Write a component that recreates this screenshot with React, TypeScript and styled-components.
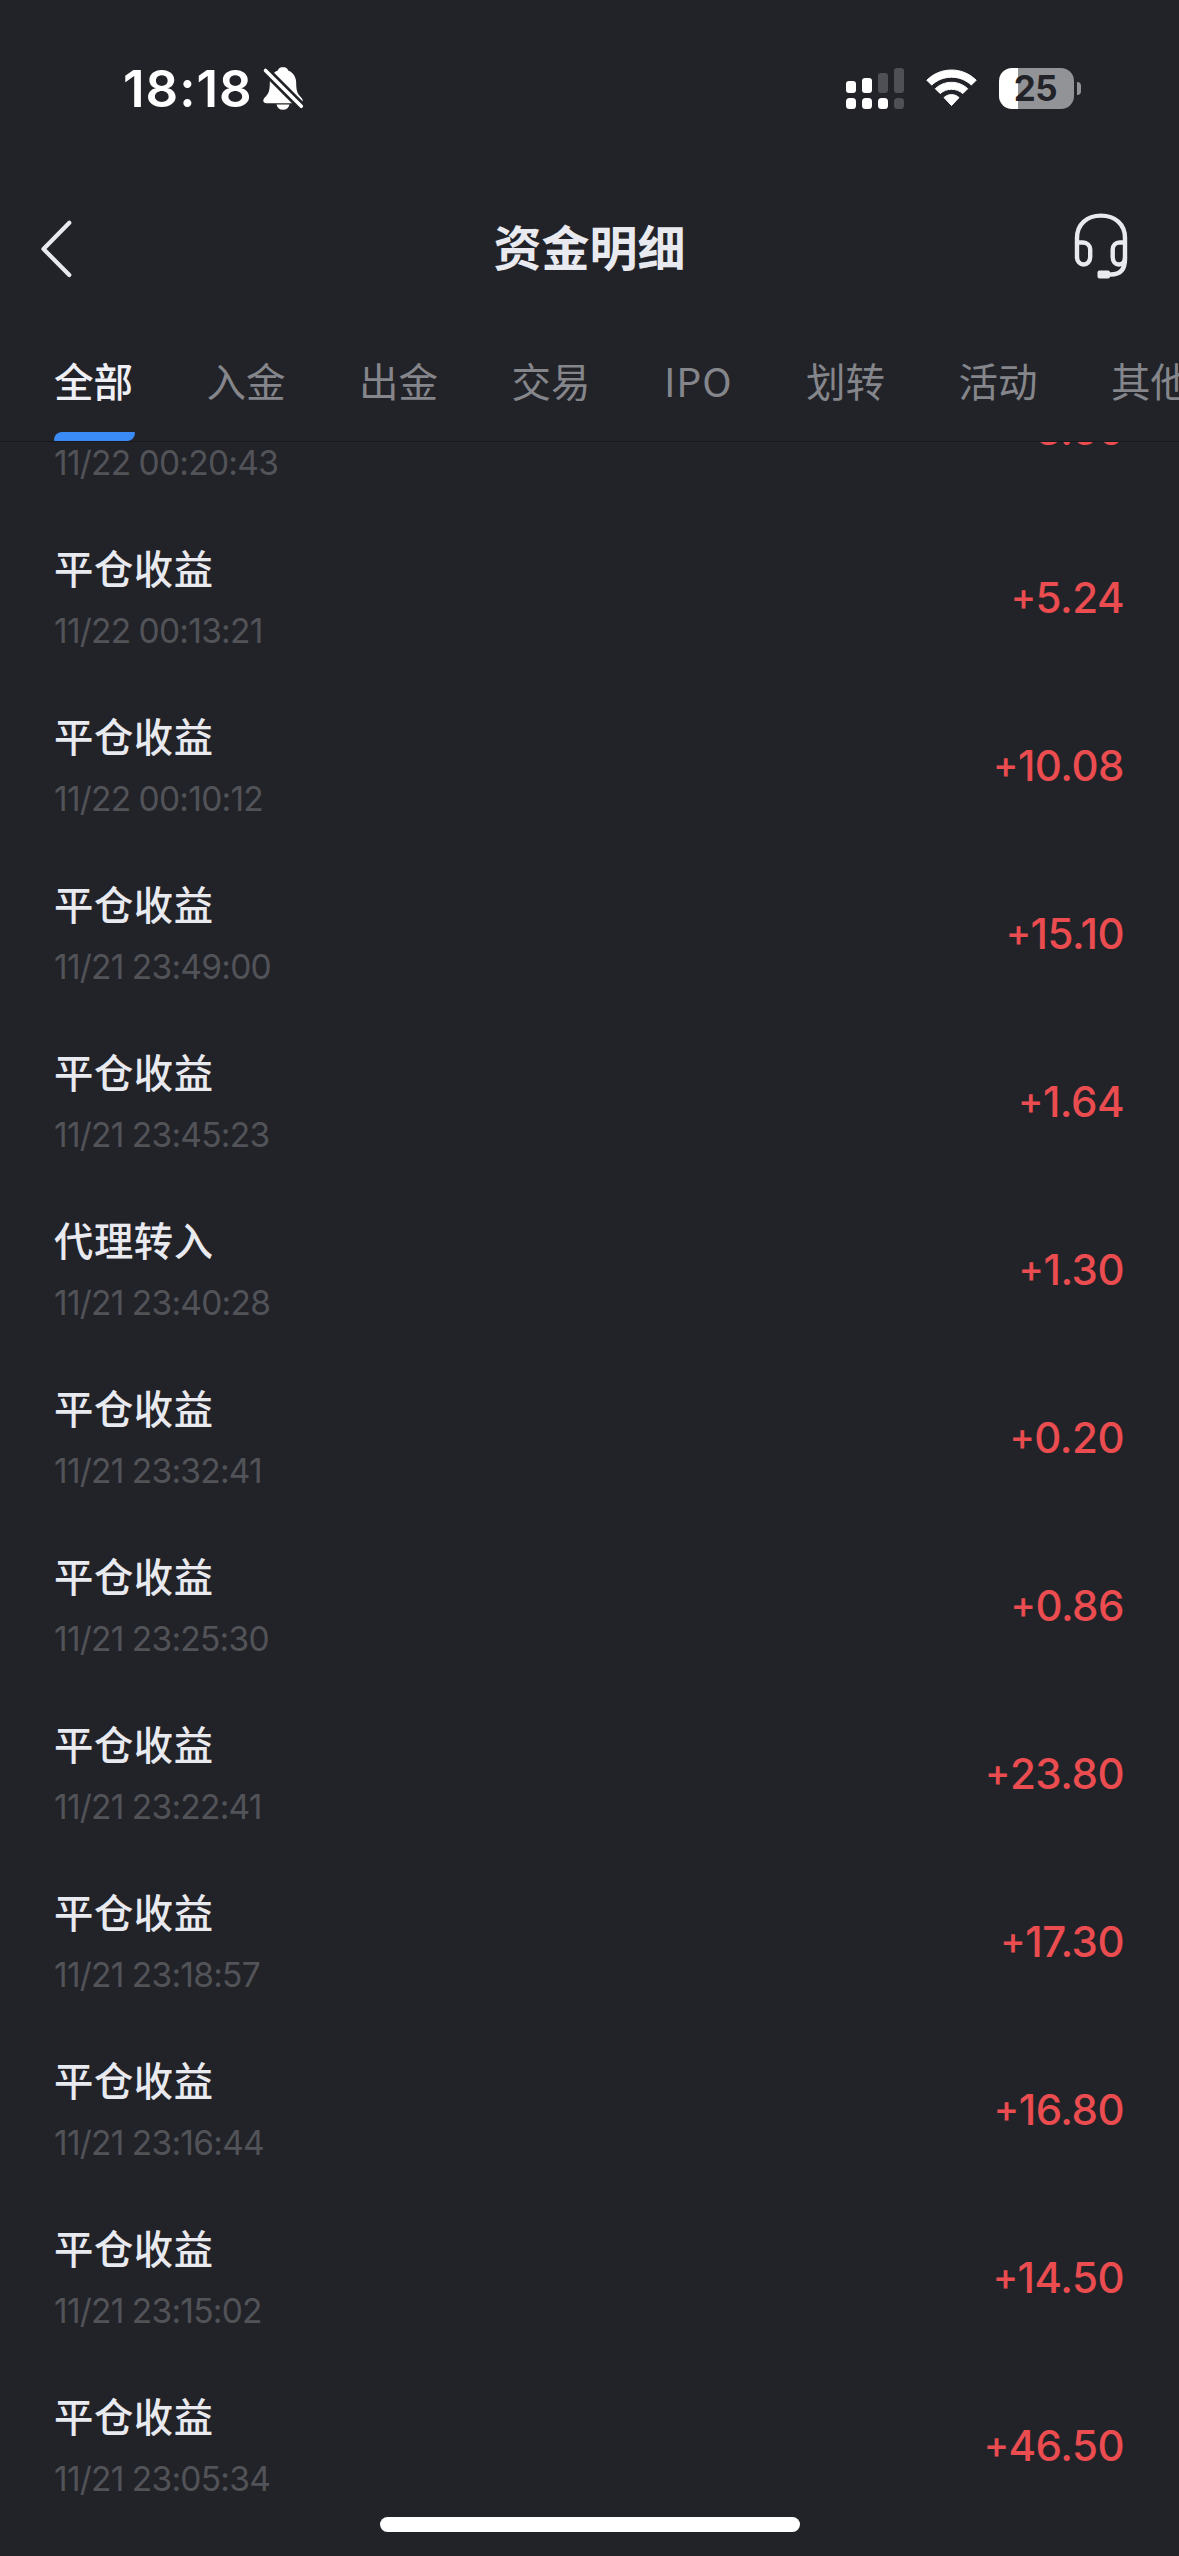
import React from "react";
import styled, { createGlobalStyle } from "styled-components";

const GlobalStyle = createGlobalStyle`
  * { box-sizing: border-box; }
  html, body { margin: 0; padding: 0; background: #222328; }
`;

const latin = `Inter, "Noto Sans CJK SC", sans-serif`;
const cjk = `"Noto Sans CJK SC", sans-serif`;

const Screen = styled.div`
  position: relative;
  display: flex;
  flex-direction: column;
  width: 1179px;
  height: 2556px;
  overflow: hidden;
  background: #222328;
  color: #e9eaf0;
  font-family: ${cjk};
`;

const StatusBar = styled.header`
  flex: none;
  display: flex;
  align-items: center;
  justify-content: space-between;
  height: 176px;
  padding: 0 98px 0 123px;
`;

const StatusGroup = styled.div<{ $gap: number }>`
  display: flex;
  align-items: center;
  gap: ${(p) => p.$gap}px;
`;

const Clock = styled.span`
  width: 128px;
  padding-top: 1px;
  font: 600 51px/60px ${latin};
  letter-spacing: 1px;
  color: #fff;
  white-space: nowrap;
`;

const Battery = styled.div`
  display: flex;
  align-items: center;
  gap: 3px;
`;

const BatteryBody = styled.div<{ $level: number }>`
  width: 75px;
  height: 41px;
  border-radius: 13px;
  background: linear-gradient(to right, #fff ${(p) => p.$level}%, #929396 ${(p) => p.$level}%);
  color: #222328;
  text-align: center;
  font: 700 35px/41px ${latin};
  letter-spacing: -0.5px;
  text-indent: -2px;
`;

const BatteryCap = styled.div`
  width: 4px;
  height: 13px;
  border-radius: 0 5px 5px 0;
  background: #929396;
`;

const NavBar = styled.nav`
  flex: none;
  display: grid;
  grid-template-columns: 120px 1fr 120px;
  align-items: center;
  height: 145px;
`;

const NavButton = styled.button<{ $end?: boolean }>`
  display: flex;
  justify-content: ${(p) => (p.$end ? "flex-end" : "flex-start")};
  padding: ${(p) => (p.$end ? "0 51px 5px 0" : "1px 0 0 40px")};
  border: 0;
  background: none;
`;

const Title = styled.h1`
  margin: 0;
  padding-bottom: 8px;
  text-align: center;
  font: 700 48px/60px ${cjk};
`;

const Tabs = styled.div`
  flex: none;
  display: flex;
  gap: 72.5px;
  height: 121px;
  padding-left: 54px;
  border-bottom: 1px solid #17181c;
  white-space: nowrap;
`;

const Tab = styled.button<{ $active?: boolean; $width?: number }>`
  flex: none;
  display: flex;
  flex-direction: column;
  align-items: flex-start;
  justify-content: space-between;
  width: ${(p) => p.$width ?? 80}px;
  padding: 29px 0 0;
  border: 0;
  background: none;
  color: ${(p) => (p.$active ? "#eff0f5" : "#85868b")};
  font: ${(p) => (p.$active ? 500 : 400)} 39.5px/60px ${cjk};
  letter-spacing: ${(p) => (p.$width ? 0.8 : 0)}px;
`;

const TabMarker = styled.span`
  width: 81px;
  height: 9px;
  border-radius: 8px 1px 8px 1px;
  background: #3a8bf5;
`;

const ListViewport = styled.main`
  flex: 1;
  overflow: hidden;
`;

const List = styled.ul`
  margin: -97px 0 0;
  padding: 0;
  list-style: none;
`;

const Row = styled.li`
  display: flex;
  align-items: center;
  justify-content: space-between;
  height: 168px;
  padding: 0 55px 0 54px;
`;

const Entry = styled.div`
  display: flex;
  flex-direction: column;
  gap: 14px;
  padding-top: 4px;
`;

const EntryName = styled.span`
  font: 500 39.3px/50px ${cjk};
  letter-spacing: 0.6px;
`;

const EntryTime = styled.time`
  font: 400 33.5px/50px ${latin};
  font-feature-settings: "calt" 0;
  letter-spacing: -0.75px;
  word-spacing: -0.5px;
  color: #525358;
`;

const Amount = styled.span`
  display: flex;
  align-items: center;
  padding-top: 1px;
  font: 500 42px/50px ${latin};
  letter-spacing: -0.5px;
  color: #ea4c50;
`;

const Sign = styled.span`
  padding-bottom: 4px;
  font-size: 38px;
`;

const HomeIndicator = styled.div`
  position: absolute;
  left: 380px;
  bottom: 24px;
  width: 420px;
  height: 15px;
  border-radius: 8px;
  background: #fff;
`;

const MutedBell = () => (
  <svg width="42" height="45" viewBox="262 66 42 45">
    <path
      fill="#fff"
      d="M283 67c-2.800 0-4.500 1.500-5.200 3.500-5 2-8 6.500-8 12.500 0 8-1.300 10.500-4.500 14-1.500 1.600-2 2.500-2 3.800 0 1.600 1.200 2.400 3 2.400h33.400c1.800 0 3-.9 3-2.500 0-1.300-.6-2.200-2-3.700-3.200-3.500-4.500-6-4.500-14 0-6-3-10.500-8-12.500-.7-2-2.400-3.500-5.200-3.500zM276.500 104.500h13c-.7 3.300-3.200 5.300-6.500 5.300s-5.800-2-6.500-5.300z"
    />
    <path d="M262 67 302 107" stroke="#222328" strokeWidth="9" />
    <path d="M265.500 70.500 301.300 106.300" stroke="#fff" strokeWidth="3.600" strokeLinecap="round" />
  </svg>
);

const Signal = () => (
  <svg width="58" height="41" viewBox="0 0 58 41">
    {[13, 10, 5, 0].map((top, i) => (
      <g key={top}>
        <rect x={i * 16} y={top} width="10" height={25 - top} rx="3" fill={i < 2 ? "#fff" : "#4f5055"} />
        <rect x={i * 16} y="30" width="10" height="11" rx="3.500" fill={i < 3 ? "#fff" : "#4f5055"} />
      </g>
    ))}
  </svg>
);

const Wifi = () => (
  <svg width="51" height="38" viewBox="0 0 51 38">
    <g fill="#fff" stroke="#fff" strokeLinejoin="round" strokeWidth="1">
      <path d="M.8 11.200C7.500 4.700 16 1 25.500 1s18 3.700 24.700 10.200L45.300 16.100C40 11 33 8.200 25.500 8.200S11 11 5.700 16.100z" />
      <path d="M9.300 19.700C13.700 15.600 19.300 13.300 25.500 13.300s11.800 2.300 16.200 6.400L36.800 24.600C33.700 21.800 29.800 20.300 25.500 20.300s-8.200 1.500-11.300 4.300z" />
      <path d="M18 28.600C20 26.700 22.600 25.600 25.500 25.600s5.500 1.100 7.500 3L25.500 36.600z" />
    </g>
  </svg>
);

const BackIcon = () => (
  <svg width="34" height="60" viewBox="40 219 34 60">
    <path
      d="M69.300 222.700 43.500 249 69.300 275"
      fill="none"
      stroke="#e9eaf0"
      strokeWidth="4.200"
      strokeLinecap="round"
      strokeLinejoin="round"
    />
  </svg>
);

const HeadsetIcon = () => (
  <svg width="54" height="66" viewBox="0 0 54 66">
    <g fill="none" stroke="#e9eaf0" strokeWidth="4.400">
      <path d="M3 45.500V25C3 11 13 2.600 27 2.600S51 11 51 25V46C51 57 46 61.500 37 61.500H34" />
      <path d="M3 29.500H9C13 29.500 16.200 32.500 16.200 36.500V44C16.200 48.500 13 51.500 9.600 51.500S3 48.500 3 44.500" />
      <path d="M51 29.500H45.500C41.500 29.500 38.700 32.500 38.700 36.500V44C38.700 48.500 41.500 51.500 45 51.500S51 48.500 51 44.500" />
    </g>
    <rect x="23.500" y="57.500" width="12.500" height="8" rx="2" fill="#e9eaf0" />
  </svg>
);

const tabs: { label: string; width?: number }[] = [
  { label: "全部" },
  { label: "入金" },
  { label: "出金" },
  { label: "交易" },
  { label: "IPO", width: 69.5 },
  { label: "划转" },
  { label: "活动" },
  { label: "其他" },
];

const entries = [
  ["平仓收益", "11/22 00:20:43", "3.60"],
  ["平仓收益", "11/22 00:13:21", "5.24"],
  ["平仓收益", "11/22 00:10:12", "10.08"],
  ["平仓收益", "11/21 23:49:00", "15.10"],
  ["平仓收益", "11/21 23:45:23", "1.64"],
  ["代理转入", "11/21 23:40:28", "1.30"],
  ["平仓收益", "11/21 23:32:41", "0.20"],
  ["平仓收益", "11/21 23:25:30", "0.86"],
  ["平仓收益", "11/21 23:22:41", "23.80"],
  ["平仓收益", "11/21 23:18:57", "17.30"],
  ["平仓收益", "11/21 23:16:44", "16.80"],
  ["平仓收益", "11/21 23:15:02", "14.50"],
  ["平仓收益", "11/21 23:05:34", "46.50"],
];

export default function App() {
  return (
    <Screen>
      <GlobalStyle />
      <StatusBar>
        <StatusGroup $gap={11}>
          <Clock>18:18</Clock>
          <MutedBell />
        </StatusGroup>
        <StatusGroup $gap={22}>
          <Signal />
          <Wifi />
          <Battery>
            <BatteryBody $level={25}>25</BatteryBody>
            <BatteryCap />
          </Battery>
        </StatusGroup>
      </StatusBar>
      <NavBar>
        <NavButton aria-label="返回">
          <BackIcon />
        </NavButton>
        <Title>资金明细</Title>
        <NavButton $end aria-label="客服">
          <HeadsetIcon />
        </NavButton>
      </NavBar>
      <Tabs>
        {tabs.map((tab, i) => (
          <Tab key={tab.label} $active={i === 0} $width={tab.width}>
            {tab.label}
            {i === 0 && <TabMarker />}
          </Tab>
        ))}
      </Tabs>
      <ListViewport>
        <List>
          {entries.map(([name, time, amount]) => (
            <Row key={time}>
              <Entry>
                <EntryName>{name}</EntryName>
                <EntryTime>{time}</EntryTime>
              </Entry>
              <Amount>
                <Sign>+</Sign>
                {amount}
              </Amount>
            </Row>
          ))}
        </List>
      </ListViewport>
      <HomeIndicator />
    </Screen>
  );
}
